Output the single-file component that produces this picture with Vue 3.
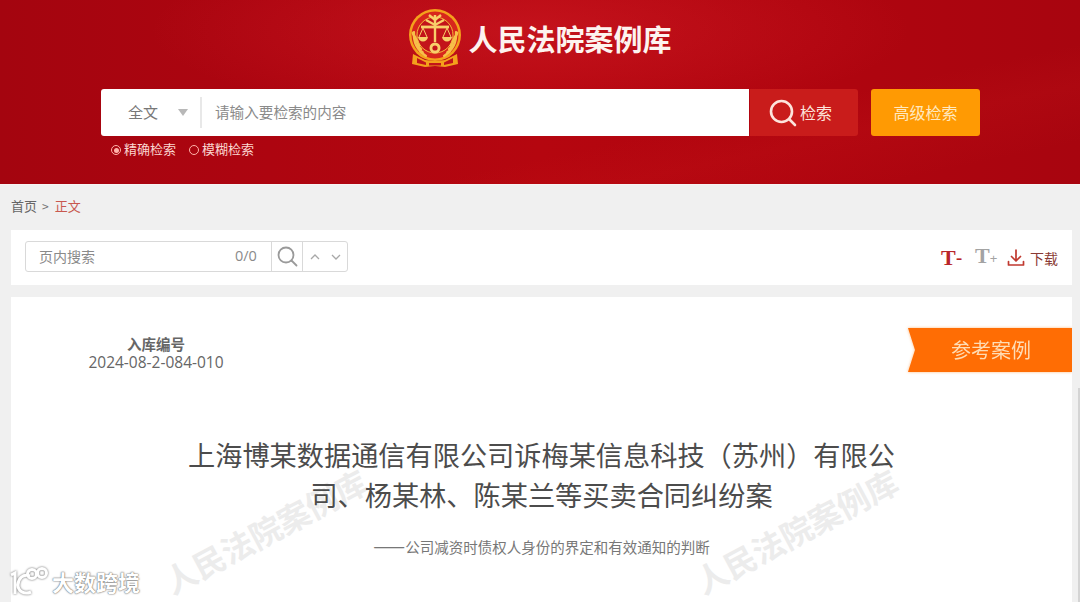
<script setup>
const searchLabel = '请输入要检索的内容'
const wheatLeft = [0, 1, 2, 3, 4, 5]
</script>

<template>
  <div class="page">
    <header class="hero">
      <div class="brand">
        <svg class="emblem" width="54" height="60" viewBox="0 0 54 60">
          <circle cx="27" cy="27" r="26" fill="#f4a11c" />
          <circle cx="27" cy="27" r="23.5" fill="#d8261c" />
          <circle cx="27" cy="27" r="18" fill="#c3141a" stroke="#f6b93a" stroke-width="1" />
          <g fill="none" stroke="#f7c04a" stroke-width="2.2" stroke-linecap="round">
            <path d="M6 24c-1 10 3 18 12 24" />
            <path d="M48 24c1 10-3 18-12 24" />
          </g>
          <g fill="#f7c04a">
            <ellipse v-for="i in wheatLeft" :key="'l' + i" :cx="5.5 + i * 1.6" :cy="26 + i * 3.6" rx="1.6" ry="2.6" :transform="`rotate(${-20 - i * 8} ${5.5 + i * 1.6} ${26 + i * 3.6})`" />
            <ellipse v-for="i in wheatLeft" :key="'r' + i" :cx="48.5 - i * 1.6" :cy="26 + i * 3.6" rx="1.6" ry="2.6" :transform="`rotate(${20 + i * 8} ${48.5 - i * 1.6} ${26 + i * 3.6})`" />
          </g>
          <g fill="none" stroke="#f8cf6a" stroke-width="2.4">
            <path d="M27 7v27" />
            <path d="M18 12l9 5 9-5" />
            <path d="M21 7l6 5 6-5" />
            <path d="M13 19h28" stroke-width="2.8" />
            <path d="M15 20l-4 9M15 20l4 9M39 20l-4 9M39 20l4 9" stroke-width="1" />
          </g>
          <path d="M10 29h10c-.6 3-2.4 4.4-5 4.4S10.600 32 10 29zM34 29h10c-.6 3-2.400 4.400-5 4.400S34.600 32 34 29z" fill="#f8cf6a" />
          <circle cx="27" cy="40" r="5.500" fill="#f8cf6a" />
          <circle cx="27" cy="40" r="2.600" fill="#c3141a" />
          <path d="M5 46l12 6 10 1 10-1 12-6 1 10-13 3-10-1-10 1-13-3z" fill="#f4a11c" />
          <path d="M9 50l9 4.500v2.500l-9-2zM45 50l-9 4.500v2.500l9-2zM21 55h12v2.500H21z" fill="#c3141a" />
        </svg>
        <h1 class="brand-name">人民法院案例库</h1>
      </div>
      <div class="search-row">
        <div class="search-box">
          <div class="scope">
            <span class="lift">全文</span>
            <i class="caret"></i>
          </div>
          <span class="placeholder lift">{{ searchLabel }}</span>
        </div>
        <button class="search-btn">
          <svg width="28" height="28" viewBox="0 0 28 28" fill="none" stroke="#fde4dc" stroke-width="2.600" stroke-linecap="round">
            <circle cx="12.500" cy="12.500" r="10.500" />
            <path d="M20.500 20.500l5.500 5.500" />
          </svg>
          <span class="lift">检索</span>
        </button>
        <button class="advanced-btn"><span class="lift">高级检索</span></button>
      </div>
      <div class="match-row">
        <span class="match"><i class="radio on"></i><span class="lift">精确检索</span></span>
        <span class="match"><i class="radio"></i><span class="lift">模糊检索</span></span>
      </div>
    </header>

    <main class="content">
      <nav class="crumbs">
        <span>首页</span>
        <span class="sep">&gt;</span>
        <span class="current">正文</span>
      </nav>

      <section class="toolbar">
        <div class="find">
          <span class="find-label lift">页内搜索</span>
          <span class="find-count lift">0/0</span>
          <span class="find-icon">
            <svg width="21" height="21" viewBox="0 0 21 21" fill="none" stroke="#9a9a9a" stroke-width="1.800" stroke-linecap="round">
              <circle cx="9" cy="9" r="7.500" />
              <path d="M14.500 14.500l5 5" />
            </svg>
          </span>
          <span class="find-arrows">
            <svg width="12" height="8" viewBox="0 0 12 8" fill="none" stroke="#a8a8a8" stroke-width="1.300"><path d="M2 6l4-4 4 4" /></svg>
            <svg width="12" height="8" viewBox="0 0 12 8" fill="none" stroke="#a8a8a8" stroke-width="1.300"><path d="M2 2l4 4 4-4" /></svg>
          </span>
        </div>
        <div class="tools">
          <span class="size red">T<small>-</small></span>
          <span class="size grey">T<small>+</small></span>
          <span class="download">
            <svg width="18" height="18" viewBox="0 0 18 18" fill="none" stroke="#c0392f" stroke-width="1.700" stroke-linecap="round" stroke-linejoin="round">
              <path d="M9 1v10.500M4.500 7.500L9 12l4.500-4.500M1.500 12.500v3.500h15v-3.500" />
            </svg>
            <span>下载</span>
          </span>
        </div>
      </section>

      <article class="case">
        <div class="case-code">
          <strong>入库编号</strong>
          <span>2024-08-2-084-010</span>
        </div>
        <div class="ribbon"><div class="ribbon-body"><span class="lift">参考案例</span></div></div>
        <h2 class="case-title">上海博某数据通信有限公司诉梅某信息科技（苏州）有限公司、杨某林、陈某兰等买卖合同纠纷案</h2>
        <p class="case-sub"><span class="dash">——</span>公司减资时债权人身份的界定和有效通知的判断</p>
        <span class="watermark wm-a">人民法院案例库</span>
        <span class="watermark wm-b">人民法院案例库</span>
      </article>
    </main>

    <div class="credit">
      <svg width="42" height="30" viewBox="0 0 42 30" fill="none" stroke="#fff" stroke-width="3">
        <path d="M3 9l4-2v21M22 10c-7-3-12 3-12 9s6 10 13 7" />
        <circle cx="24" cy="8" r="4.500" />
        <circle cx="34" cy="7" r="4.500" />
      </svg>
      <span>大数跨境</span>
    </div>
    <i class="scroll-edge"></i>
  </div>
</template>

<style>
html,
body {
  margin: 0;
  height: 100%;
  overflow: hidden;
  background: #f0f0f0;
}
</style>

<style scoped>
.page {
  position: relative;
  width: 1080px;
  height: 602px;
  overflow: hidden;
  background: #f0f0f0;
  font-family: "Noto Sans CJK SC", "Noto Sans", sans-serif;
}

.lift {
  padding-bottom: 2px;
}

.hero {
  height: 185px;
  box-sizing: border-box;
  padding-top: 7px;
  background:
    linear-gradient(168deg, rgba(255, 60, 50, 0) 66%, rgba(210, 30, 30, 0.12) 76%, rgba(140, 0, 10, 0) 90%),
    radial-gradient(ellipse 380px 90px at 530px 30px, rgba(210, 30, 40, 0.5), rgba(190, 10, 20, 0) 100%),
    linear-gradient(90deg, #a4050f 0%, #ad0510 25%, #b5060f 50%, #b0050f 75%, #a8050f 100%);
  border-bottom: 1px solid #f7f3f3;
}

.brand {
  display: flex;
  align-items: center;
  justify-content: center;
  gap: 6px;
  height: 61px;
}

.emblem {
  flex: none;
}

.brand-name {
  margin: 0;
  color: #fdf3ef;
  font-size: 29px;
  font-weight: 700;
  line-height: 56px;
  letter-spacing: 0;
  font-family: "Noto Sans CJK SC", serif;
}

.search-row {
  display: flex;
  justify-content: center;
  align-items: stretch;
  height: 47px;
  margin-top: 21px;
  padding-left: 1px;
}

.search-box {
  width: 648px;
  display: flex;
  align-items: center;
  background: #fff;
  border-radius: 3px 0 0 3px;
}

.scope {
  width: 101px;
  height: 31px;
  box-sizing: border-box;
  display: flex;
  align-items: center;
  padding-left: 27px;
  gap: 20px;
  border-right: 2px solid #e8e8e8;
  color: #777;
  font-size: 15px;
}

.caret {
  width: 0;
  height: 0;
  border-left: 5.500px solid transparent;
  border-right: 5.500px solid transparent;
  border-top: 7px solid #b8b8b8;
}

.placeholder {
  padding-left: 13px;
  color: #8a8a8a;
  font-size: 14.600px;
}

.search-btn,
.advanced-btn {
  border: 0;
  padding: 0;
  display: flex;
  align-items: center;
  font-family: inherit;
  font-size: 16px;
}

.search-btn {
  width: 108px;
  margin-left: 1px;
  padding-left: 19px;
  gap: 3px;
  background: #c91c1b;
  color: #fde4dc;
  border-radius: 0 3px 3px 0;
}

.advanced-btn {
  width: 109px;
  margin-left: 13px;
  justify-content: center;
  background: #ff9a03;
  color: #ffe9c0;
  border-radius: 3px;
}

.match-row {
  display: flex;
  gap: 13px;
  margin: 4px 0 0 111px;
  color: #fbd6d0;
  font-size: 13px;
  line-height: 18px;
}

.match {
  display: flex;
  align-items: center;
  gap: 3px;
}

.radio {
  position: relative;
  width: 10px;
  height: 10px;
  box-sizing: border-box;
  border: 1.500px solid #ffb3aa;
  border-radius: 50%;
}

.radio.on::after {
  content: "";
  position: absolute;
  inset: 1.500px;
  border-radius: 50%;
  background: #ffb3aa;
}

.content {
  padding: 0 8px 0 11px;
}

.crumbs {
  height: 45px;
  box-sizing: border-box;
  padding-bottom: 4px;
  display: flex;
  align-items: center;
  gap: 4px;
  color: #666;
  font-size: 13px;
}

.sep {
  color: #777;
  font-size: 12px;
  padding: 0 1px;
}

.current {
  margin-left: 1px;
  color: #c8584f;
}

.toolbar {
  height: 55px;
  box-sizing: border-box;
  padding: 0 14px 2px;
  display: flex;
  align-items: center;
  justify-content: space-between;
  background: #fff;
}

.find {
  width: 323px;
  height: 31px;
  box-sizing: border-box;
  display: flex;
  align-items: center;
  border: 1px solid #d9d9d9;
  border-radius: 3px;
  color: #8a8a8a;
}

.find-label {
  flex: 1;
  padding-left: 13px;
  font-size: 14px;
}

.find-count {
  width: 36px;
  font-size: 14.500px;
  font-family: "Open Sans", sans-serif;
}

.find-icon {
  width: 32px;
  height: 100%;
  display: flex;
  align-items: center;
  justify-content: center;
  border-left: 1px solid #d9d9d9;
  border-right: 1px solid #d9d9d9;
  box-sizing: border-box;
}

.find-arrows {
  width: 44px;
  display: flex;
  justify-content: center;
  gap: 9px;
}

.tools {
  display: flex;
  align-items: center;
  margin-top: 2px;
  color: #8a3a34;
}

.size {
  font-family: "Liberation Serif", serif;
  font-weight: 700;
  font-size: 22px;
  line-height: 24px;
  width: 35px;
  margin-left: -1px;
}

.size small {
  font-size: 20px;
  font-family: "Liberation Sans", sans-serif;
  font-weight: 400;
}

.size.red {
  color: #b8262a;
}

.size.grey {
  width: 32px;
  color: #a3a3a3;
}

.size.grey small {
  font-size: 13px;
}

.download {
  display: flex;
  align-items: center;
  gap: 5px;
  font-size: 14px;
}

.case {
  position: relative;
  height: 320px;
  margin-top: 12px;
  background: #fff;
  overflow: hidden;
}

.case-code {
  width: 136px;
  margin-left: 77px;
  padding-top: 37px;
  display: flex;
  flex-direction: column;
  align-items: center;
  color: #666;
  font-size: 14.500px;
  line-height: 19px;
}

.case-code strong {
  font-weight: 700;
}

.case-code span {
  font-family: "Open Sans", sans-serif;
  font-size: 15.500px;
  line-height: 18px;
  white-space: nowrap;
}

.ribbon {
  position: absolute;
  top: 31px;
  right: 0;
  filter: drop-shadow(0 0 1.500px rgba(255, 140, 40, 0.6));
}

.ribbon-body {
  width: 164px;
  height: 44px;
  display: flex;
  align-items: center;
  justify-content: center;
  padding-left: 2px;
  box-sizing: border-box;
  background: #ff6d04;
  color: #ffdcb4;
  font-size: 20px;
  clip-path: polygon(0 0, 100% 0, 100% 100%, 0 100%, 7px 50%);
}

.case-title {
  position: relative;
  z-index: 1;
  width: 728px;
  margin: 63px auto 0;
  color: #4c4c4c;
  font-size: 27.200px;
  font-weight: 400;
  line-height: 40px;
  text-align: center;
}

.case-sub {
  position: relative;
  z-index: 1;
  margin: 21px 0 0;
  color: #777;
  font-size: 14.500px;
  line-height: 20px;
  text-align: center;
}

.dash {
  font-size: 19px;
  line-height: 1;
}

.watermark {
  position: absolute;
  color: #ececec;
  font-size: 32px;
  font-weight: 700;
  white-space: nowrap;
  transform: rotate(-28deg);
  transform-origin: left center;
}

.wm-a {
  left: 155px;
  top: 263px;
}

.wm-b {
  left: 686px;
  top: 263px;
}

.credit {
  position: absolute;
  left: 8px;
  bottom: 6px;
  display: flex;
  align-items: center;
  gap: 2px;
  color: #fff;
  font-size: 22px;
  font-weight: 700;
  line-height: 28px;
  text-shadow: 0 0 2px #666, 0 0 1px #666;
}

.credit svg {
  filter: drop-shadow(0 0 1px #666);
}

.scroll-edge {
  position: absolute;
  right: 0;
  top: 388px;
  width: 2px;
  height: 214px;
  background: #d4d4d4;
}
</style>
